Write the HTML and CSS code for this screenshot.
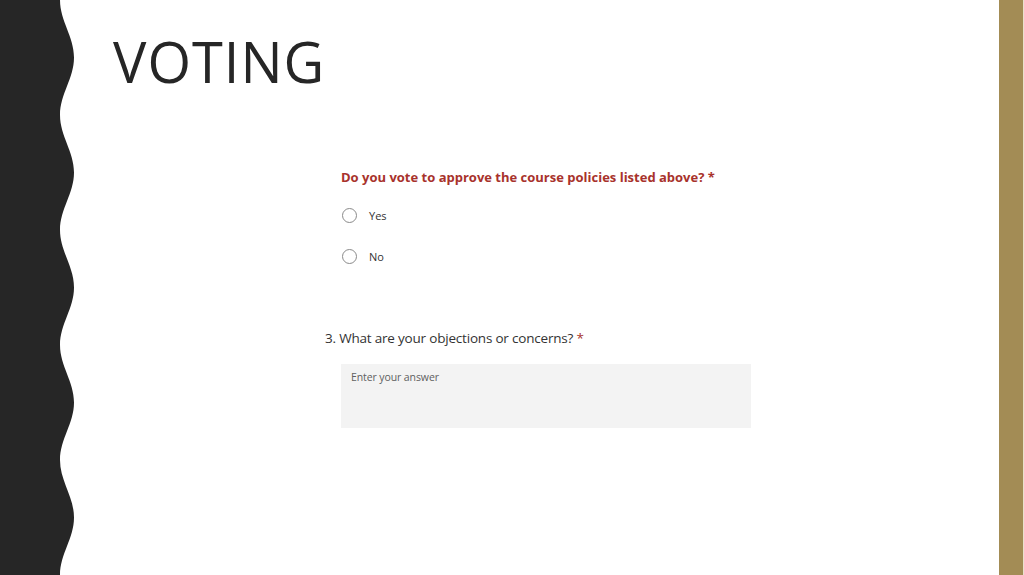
FILE: index.html
```html
<!DOCTYPE html>
<html lang="en">
<head>
<meta charset="utf-8">
<title>Voting</title>
<link rel="stylesheet" href="styles.css">
</head>
<body>
<div class="slide">
  <div class="wave">
    <svg width="74" height="575" viewBox="0 0 74 575" aria-hidden="true">
      <path fill="#262626" d="M0 0 H60 C60 21 74 36.5 74 57.5 C74 78.5 60 94 60 115 C60 136 74 151.5 74 172.5 C74 193.5 60 209 60 230 C60 251 74 266.5 74 287.5 C74 308.5 60 324 60 345 C60 366 74 381.5 74 402.5 C74 423.5 60 439 60 460 C60 481 74 496.5 74 517.5 C74 538.5 60 554 60 575 H0 Z"/>
    </svg>
  </div>
  <main class="main">
    <h1 class="title">VOTING</h1>
    <section class="form">
      <div class="q-red">Do you vote to approve the course policies listed above? *</div>
      <div class="options">
        <div class="option"><span class="radio"></span><span class="opt-label">Yes</span></div>
        <div class="option"><span class="radio"></span><span class="opt-label">No</span></div>
      </div>
      <div class="q3">3. What are your objections or concerns? <span class="req">*</span></div>
      <div class="answer">Enter your answer</div>
    </section>
  </main>
  <div class="goldbar"></div>
  <div class="edge"></div>
</div>
</body>
</html>
```
FILE: styles.css
```css
html, body {
  margin: 0;
  padding: 0;
  background: #ffffff;
}
.slide {
  display: flex;
  width: 1024px;
  height: 575px;
  overflow: hidden;
  background: #ffffff;
}
.wave {
  flex: none;
  width: 74px;
  height: 575px;
}
.wave svg {
  display: block;
}
.main {
  flex: 1;
  display: flex;
  flex-direction: column;
  padding-top: 33px;
}
.title {
  margin: 0 0 0 39px;
  font-family: "Open Sans", sans-serif;
  font-weight: 400;
  font-size: 56px;
  line-height: 56px;
  letter-spacing: 1px;
  color: #262626;
}
.form {
  display: flex;
  flex-direction: column;
  margin-left: 251px;
  width: 426px;
  margin-top: 79px;
  font-family: "Open Sans", sans-serif;
}
.q-red {
  margin-left: 16px;
  font-size: 13px;
  line-height: 18px;
  font-weight: 700;
  color: #a8322c;
  white-space: nowrap;
}
.options {
  display: flex;
  flex-direction: column;
  gap: 25px;
  margin-top: 21px;
  margin-left: 17px;
}
.option {
  display: flex;
  align-items: center;
  height: 16px;
  gap: 12px;
}
.radio {
  width: 13px;
  height: 13px;
  border: 1.5px solid #8a8a8a;
  border-radius: 50%;
  flex: none;
}
.opt-label {
  font-size: 11px;
  color: #333333;
}
.q3 {
  margin-top: 64px;
  font-size: 13.5px;
  line-height: 20px;
  letter-spacing: -0.2px;
  color: #333333;
  white-space: nowrap;
}
.req {
  color: #a8322c;
}
.answer {
  margin-top: 16px;
  margin-left: 16px;
  width: 400px;
  height: 58px;
  padding: 6px 0 0 10px;
  background: #f3f3f3;
  font-size: 10.5px;
  line-height: 14px;
  letter-spacing: -0.1px;
  color: #606060;
}
.goldbar {
  flex: none;
  width: 24px;
  background: #a38c55;
}
.edge {
  flex: none;
  width: 1px;
  background: #e9e2cc;
}
```
